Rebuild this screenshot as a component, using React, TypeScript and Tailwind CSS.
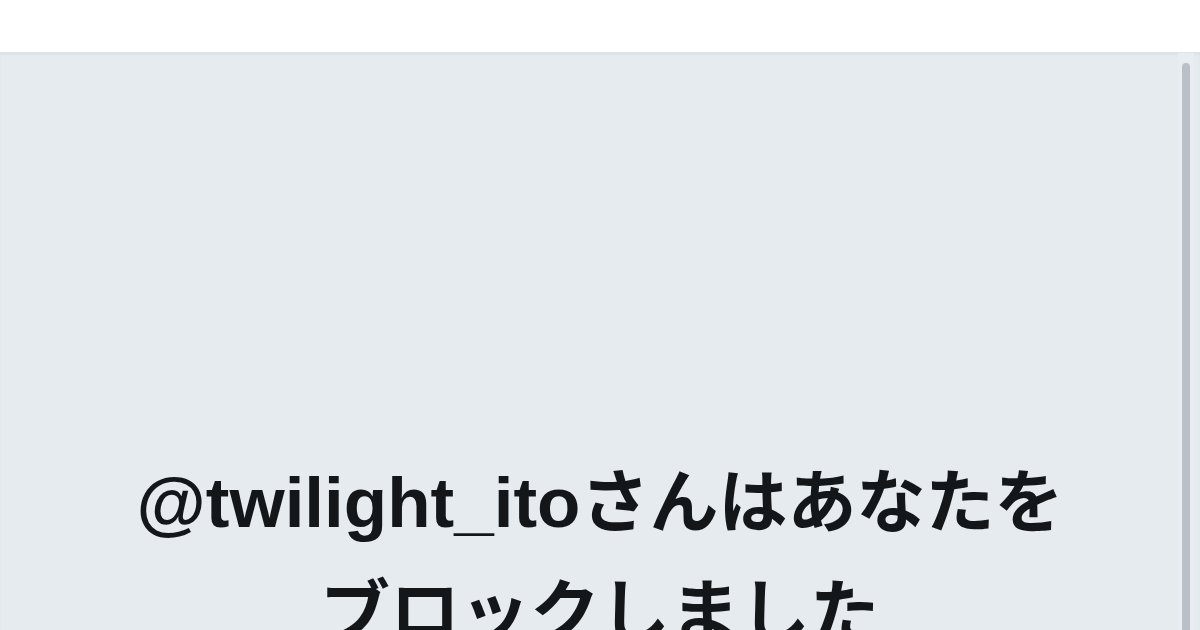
export default function App() {
  return (
    <div className="flex h-[630px] w-[1200px] flex-col overflow-hidden bg-white">
      {/* Top bar */}
      <div className="h-[53px] shrink-0 border-b border-[#dde3e8] bg-white" />

      {/* Blocked panel */}
      <div className="relative flex-1 bg-[#e6ebf0] shadow-[inset_0_2px_3px_rgba(0,0,0,0.04)]">
        <div className="flex flex-col items-center pt-[392px] text-center text-[69px] leading-[105px] text-[#14171a]">
          <p className="font-bold">
            <span className="font-['Liberation_Sans',sans-serif] text-[71px]">@twilight_ito</span>
            <span className="font-['Noto_Sans_CJK_JP',sans-serif]">さんはあなたを</span>
          </p>
          <p className="font-['Noto_Sans_CJK_JP',sans-serif] text-[70px] font-bold">ブロックしました</p>
        </div>

        {/* Scrollbar */}
        <div className="absolute top-0 right-[6px] bottom-0 flex w-[16px] justify-center bg-[#e9edf1] pt-[10px]">
          <div className="h-full w-[8px] rounded-t-full bg-[#b9c0c7]" />
        </div>
      </div>
    </div>
  );
}
